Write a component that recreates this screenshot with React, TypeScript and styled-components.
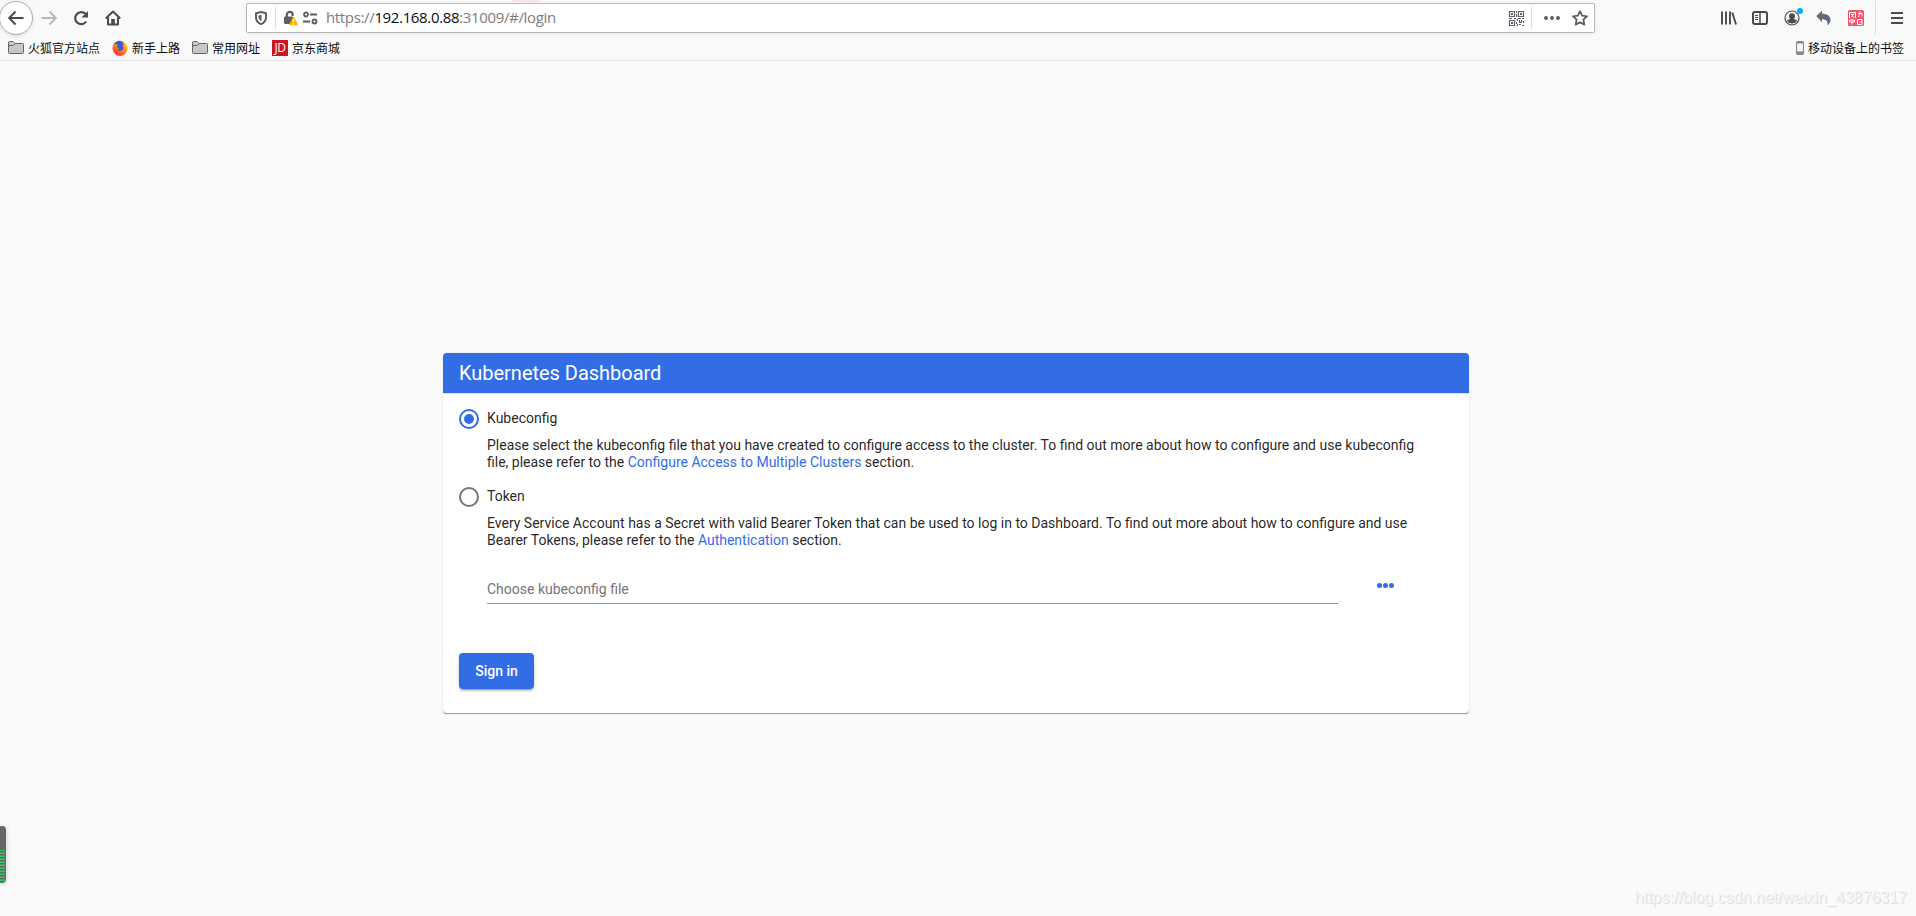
import React, { useState } from "react";
import styled, { createGlobalStyle } from "styled-components";

const GlobalStyle = createGlobalStyle`
  *, *::before, *::after { box-sizing: border-box; }
  html, body { margin: 0; padding: 0; }
  body {
    background: #fafafa;
    color: rgba(0, 0, 0, 0.87);
    font-family: Roboto, "Liberation Sans", sans-serif;
    overflow: hidden;
  }
`;

const Page = styled.div`
  display: flex;
  flex-direction: column;
  width: 100%;
  height: 100vh;
  position: relative;
`;

/* Browser chrome */
const Chrome = styled.header`
  height: 61px;
  flex: none;
  background: #f9f9fa;
  border-bottom: 1px solid #e0e0e1;
  position: relative;
`;

const TabRemnant = styled.span`
  position: absolute;
  left: 512px;
  top: 0;
  width: 28px;
  height: 2px;
  border-radius: 0 0 3px 3px;
  background: #fbe3e5;
`;

const NavBar = styled.div`
  display: flex;
  align-items: center;
  height: 36px;
`;

const Icon = styled.svg<{ $ml?: number; $w?: number; $h?: number }>`
  display: block;
  flex: none;
  width: ${(p) => p.$w ?? 16}px;
  height: ${(p) => p.$h ?? 16}px;
  margin-left: ${(p) => p.$ml ?? 0}px;
  overflow: visible;
`;

const BackButton = styled.div`
  width: 34px;
  height: 34px;
  flex: none;
  margin-left: -1px;
  display: flex;
  align-items: center;
  justify-content: center;
  border: 1px solid #b1b1b3;
  border-radius: 50%;
  background: #fff;
  box-shadow: 0 1px 4px rgba(0, 0, 0, 0.1);
`;

const UrlBar = styled.div`
  display: flex;
  align-items: center;
  width: 1349px;
  height: 30px;
  flex: none;
  margin-left: 125px;
  padding: 0 6px;
  background: #fff;
  border: 1px solid #b8b8ba;
  border-radius: 2px;
  box-shadow: 0 1px 4px rgba(0, 0, 0, 0.06);
`;

const Divider = styled.span<{ $ml: number; $h: number }>`
  width: 1px;
  height: ${(p) => p.$h}px;
  flex: none;
  margin-left: ${(p) => p.$ml}px;
  background: #dcdcde;
`;

const Url = styled.div`
  flex: 1;
  margin-left: 8px;
  padding-bottom: 2px;
  color: #7c7c80;
  font: 15px/20px "Open Sans", "Noto Sans", sans-serif;
  letter-spacing: -0.35px;
  white-space: nowrap;
  b { font-weight: 400; color: #0c0c0d; }
`;

const Bookmarks = styled.div`
  display: flex;
  align-items: center;
  height: 24px;
  padding: 0 12px 1px 8px;
  font: 12px/18px "Noto Sans CJK SC", sans-serif;
  color: #0c0c0d;
`;

const Bookmark = styled.div<{ $mr?: number }>`
  display: flex;
  align-items: center;
  gap: 4px;
  margin-right: ${(p) => p.$mr ?? 12}px;
  white-space: nowrap;
`;

const JdLogo = styled.span`
  width: 16px;
  height: 16px;
  display: flex;
  align-items: center;
  justify-content: center;
  background: #c91623;
  color: #fff;
  font: 12px/16px "Open Sans", sans-serif;
  letter-spacing: -0.4px;
`;

const Spacer = styled.span`
  flex: 1;
`;

/* Login page */
const Main = styled.main`
  flex: 1;
  display: flex;
  justify-content: center;
  align-items: flex-start;
  padding: 292px 4px 0 0;
`;

const Card = styled.section`
  width: 1026px;
  height: 361px;
  background: #fff;
  border-radius: 4px;
  overflow: hidden;
  border-bottom: 1px solid #9c9c9c;
  box-shadow: 0 0 2px rgba(0, 0, 0, 0.16);
`;

const CardTitle = styled.h1`
  margin: 0;
  height: 41px;
  padding: 0 16px;
  background: #326de6;
  background-clip: padding-box;
  border-bottom: 1px solid #e0e0e0;
  color: #fff;
  font-size: 20px;
  font-weight: 400;
  line-height: 40px;
  letter-spacing: -0.02px;
`;

const Form = styled.form`
  padding: 15px 16px 0;
`;

const Option = styled.div`
  height: 78px;
`;

const OptionLabel = styled.label`
  display: flex;
  align-items: center;
  height: 20px;
  gap: 8px;
  font-size: 14px;
  line-height: 17px;
  input { display: none; }
  span { margin-top: -2px; }
`;

const RadioMark = styled.i<{ $on: boolean }>`
  width: 20px;
  height: 20px;
  display: flex;
  align-items: center;
  justify-content: center;
  border: 2px solid ${(p) => (p.$on ? "#326de6" : "#757575")};
  border-radius: 50%;
  &::after {
    content: "";
    width: 10px;
    height: 10px;
    border-radius: 50%;
    background: ${(p) => (p.$on ? "#326de6" : "transparent")};
  }
`;

const Hint = styled.p`
  margin: 8px 0 0 28px;
  width: 940px;
  font-size: 14px;
  line-height: 17px;
  a { color: #326de6; text-decoration: none; }
`;

const FileRow = styled.div`
  display: flex;
  align-items: flex-start;
  margin: 8px 0 0 28px;
`;

const FileField = styled.div`
  width: 851px;
  height: 31px;
  padding-top: 8px;
  border-bottom: 1px solid #949494;
  color: #757575;
  font-size: 14px;
  line-height: 17px;
`;

const MoreButton = styled.button`
  margin: 7px 0 0 33px;
  padding: 0 0 1px;
  width: 28px;
  height: 12px;
  border: 0;
  background: none;
  display: flex;
  align-items: center;
  justify-content: center;
  gap: 1px;
  i { width: 5px; height: 5px; border-radius: 50%; background: #326de6; }
`;

const SignIn = styled.button`
  display: block;
  width: 75px;
  height: 36px;
  margin-top: 49px;
  padding: 0;
  border: 0;
  border-radius: 4px;
  background: #326de6;
  color: #fff;
  font: 500 14px/36px Roboto, sans-serif;
  box-shadow: 0 3px 1px -2px rgba(0, 0, 0, 0.2), 0 2px 2px rgba(0, 0, 0, 0.14), 0 1px 5px rgba(0, 0, 0, 0.12);
`;

const Meter = styled.aside`
  position: absolute;
  left: -2px;
  top: 826px;
  width: 8px;
  height: 57px;
  padding: 24px 1px 1px 0;
  border-radius: 4px;
  background: #666;
  box-shadow: 0 1px 5px rgba(0, 0, 0, 0.2);
  &::after {
    content: "";
    display: block;
    height: 31px;
    background: repeating-linear-gradient(#35c56a 0 1px, #666 1px 2px, #4f9a61 2px 3px);
  }
`;

const Watermark = styled.div`
  position: absolute;
  right: 9px;
  bottom: 8px;
  color: #f4f4f4;
  font: 16px/20px "Liberation Sans", sans-serif;
  text-shadow: 1px 1px 0 #dedede;
`;

const ink = "#4a4a4f";

const FolderIcon = () => (
  <Icon viewBox="0 0 16 16">
    <path d="M.5 2.500q0-1 1-1H5l2 2h7.500q1 0 1 1V12.500q0 1-1 1h-13q-1 0-1-1Z" fill="#c8c8ca" stroke="#646467" />
    <path d="M1 5.500h4.500l2-2" fill="none" stroke="#646467" />
  </Icon>
);

const FirefoxIcon = () => (
  <Icon viewBox="0 0 16 16">
    <defs>
      <linearGradient id="flame" x1=".8" y1="0" x2=".2" y2="1">
        <stop offset="0" stopColor="#ffe32b" />
        <stop offset=".5" stopColor="#ff8415" />
        <stop offset="1" stopColor="#ee2848" />
      </linearGradient>
    </defs>
    <circle cx="7.500" cy="7" r="6.200" fill="#3b5bd0" />
    <path d="M10 .5c2 1.400 5.500 3.500 5.500 8a7.400 7.400 0 0 1-15 0c0-2.200 1-4.600 2.300-5.500v1.600C4 3.800 5.600 4.200 6 5.200c-1 .5-1.600 1.200-1.200 2.100.8.8 2.300 0 2.500.8 0 .9-1.500.8-1.600 1.500.8 1.800 4.700 1.800 5.500-.8.7-2-.2-3.500-1.400-4.300 1.200 0 1.800.3 2.200.9C12 3.500 10 2.400 10 .5Z" fill="url(#flame)" />
  </Icon>
);

const UrlIcons = () => (
  <>
    <Icon viewBox="0 0 16 16">
      <path d="M8 2 13 3.200v4c0 3.400-1.800 5.500-5 7-3.200-1.500-5-3.600-5-7v-4Z" fill="none" stroke="#5f5f63" strokeWidth="2" strokeLinejoin="round" />
      <path d="M8.500 4.800v6.400C6.700 10.300 5.500 9.100 5.500 7.200V5.400Z" fill="#5f5f63" />
    </Icon>
    <Divider $ml={6} $h={22} />
    <Icon viewBox="0 0 16 16" $ml={7}>
      <path d="M3.800 8V4.800a2.900 2.900 0 0 1 5.800 0V6" fill="none" stroke="#5f5f63" strokeWidth="2.200" />
      <rect x="1" y="6.500" width="9" height="7.500" rx="1.200" fill="#5f5f63" />
      <path d="m10.500 7 4 7.800h-8Z" fill="#ffb000" stroke="#ffb000" strokeLinejoin="round" />
      <path d="M10.500 9v3M10.500 13.200v1.200" stroke="#fff" strokeWidth="1.300" />
    </Icon>
    <Icon viewBox="0 0 16 16" $ml={3}>
      <g fill="none" stroke="#5f5f63" strokeWidth="1.800">
        <circle cx="4" cy="4.500" r="2" /><path d="M8 4.500h7M1 11.500h7" />
        <circle cx="12.500" cy="11.500" r="2" />
      </g>
    </Icon>
  </>
);

const QrIcon = () => (
  <Icon viewBox="0 0 15 15" $w={15} $h={15}>
    <g fill="none" stroke="#5c6068" strokeWidth="1.150">
      <path d="M.5.5h5v5h-5ZM9.500.5h5v5h-5ZM.5 9.500h5v5h-5Z" />
      <path d="M7.500 0v2M7.500 3v3M0 7.500h3M5 7.500h2M9 7.500h3M13 7.500h2M8.500 8v2M10.500 9v3M12.500 9v2M14.500 10v2M7.500 11v2M8.500 13v2M10 13.500h2M13 14.500h2M11 11.500h2" />
    </g>
    <path d="M2 2h2v2H2ZM11 2h2v2h-2ZM2 11h2v2H2Z" fill="#5c6068" />
  </Icon>
);

const ToolbarIcons = () => (
  <>
    <Icon viewBox="0 0 16 16" $ml={126}>
      <path d="M1 1.500v13M5 1.500v13M9 1.500v13M11.300 2.500 15 14.500" fill="none" stroke={ink} strokeWidth="1.900" />
    </Icon>
    <Icon viewBox="0 0 16 16" $ml={15}>
      <rect x="1" y="2" width="14" height="12" rx="2" fill="none" stroke={ink} strokeWidth="2" />
      <path d="M8 2v12" stroke={ink} strokeWidth="1.500" /><path d="M3 5.500h3M3 7.500h3M3 9.500h3" stroke={ink} />
    </Icon>
    <Icon viewBox="0 0 16 16" $ml={16}>
      <circle cx="8" cy="8" r="7" fill="none" stroke={ink} strokeWidth="1.200" />
      <circle cx="8" cy="6.300" r="3" fill={ink} />
      <path d="M3 10.800c1-1 2.500-1.500 3.400-1.700h3.200c1 .2 2.400.7 3.400 1.700-2 3.600-8 3.600-10 0Z" fill={ink} />
      <circle cx="16" cy="1" r="3" fill="#00b3f4" />
    </Icon>
    <Icon viewBox="0 0 16 16" $ml={16}>
      <path d="M.3 6 6 .8v3c5 0 8.500 2.200 8.500 6.200 0 2.400-1.200 4-3.500 5.200 1.500-3.600-.5-6-5-6v3Z" fill="#5f6b78" />
    </Icon>
    <Icon viewBox="0 0 16 16" $ml={16}>
      <rect width="16" height="16" rx="1.500" fill="#f4516c" />
      <g fill="none" stroke="#fff">
        <path d="M1.500 2.500h6M1.500 2.500v5.500M7.500 2.500v5.500M3 4.500h3M4.500 3.500v3M3 7.500l1.500-1.500L6 7.500M10 3.500h4v3M12 1.500v2L10.500 7M1.500 10v2h5v-2ZM4 9v5.500M9.500 9.500h4.500v5M9.500 9.500v5H14M11.500 12H14" />
      </g>
    </Icon>
    <Divider $ml={11} $h={34} />
    <Icon viewBox="0 0 12 16" $ml={15} $w={12}>
      <path d="M0 3h12M0 8h12M0 13h12" stroke={ink} strokeWidth="2" />
    </Icon>
  </>
);

export default function App() {
  const [mode, setMode] = useState("kubeconfig");
  return (
    <Page>
      <GlobalStyle />
      <Chrome>
        <TabRemnant />
        <NavBar>
          <BackButton>
            <Icon viewBox="0 0 16 16">
              <path d="M15.500 8H1.500M7.500 1.500 1.200 8l6.300 6.500" fill="none" stroke={ink} strokeWidth="2" />
            </Icon>
          </BackButton>
          <Icon viewBox="0 0 16 16" $ml={8}>
            <path d="M.5 8h14M8.500 1.500 14.800 8l-6.300 6.500" fill="none" stroke="#b9b9bb" strokeWidth="2" />
          </Icon>
          <Icon viewBox="0 0 16 16" $ml={16}>
            <path d="M13.200 11.500A6 6 0 1 1 12.500 4" fill="none" stroke={ink} strokeWidth="2.200" />
            <path d="M15 1v6.500H8.500Z" fill={ink} />
          </Icon>
          <Icon viewBox="0 0 16 16" $ml={16}>
            <path d="M.8 8.500 8 1.500l7.200 7M3 7.500V14.500h10V7.500" fill="none" stroke={ink} strokeWidth="2" strokeLinejoin="round" />
            <path d="M6.200 15V9h3.600v6Z" fill={ink} />
          </Icon>
          <UrlBar>
            <UrlIcons />
            <Url>https://<b>192.168.0.88</b>:31009/#/login</Url>
            <QrIcon />
            <Divider $ml={7} $h={22} />
            <Icon viewBox="0 0 16 16" $ml={12}>
              <g fill="#5f5f63"><circle cx="2" cy="8" r="2" /><circle cx="8" cy="8" r="2" /><circle cx="14" cy="8" r="2" /></g>
            </Icon>
            <Icon viewBox="0 0 16 16" $ml={12}>
              <path d="m8 1.200 2.100 4.500 4.900.6-3.600 3.400.9 4.900L8 12.200l-4.300 2.400.9-4.900L1 6.300l4.900-.6Z" fill="none" stroke="#5f5f63" strokeWidth="1.800" strokeLinejoin="round" />
            </Icon>
          </UrlBar>
          <ToolbarIcons />
        </NavBar>
        <Bookmarks>
          <Bookmark><FolderIcon />火狐官方站点</Bookmark>
          <Bookmark><FirefoxIcon />新手上路</Bookmark>
          <Bookmark><FolderIcon />常用网址</Bookmark>
          <Bookmark><JdLogo>JD</JdLogo>京东商城</Bookmark>
          <Spacer />
          <Bookmark $mr={0}>
            <Icon viewBox="0 0 8 14" $w={8} $h={14}>
              <rect x=".5" y=".5" width="7" height="13" rx="1" fill="#85858a" stroke="#85858a" />
              <path d="M1 2.500h6v8H1Z" fill="#f5f5f6" />
            </Icon>
            移动设备上的书签
          </Bookmark>
        </Bookmarks>
      </Chrome>

      <Main>
        <Card>
          <CardTitle>Kubernetes Dashboard</CardTitle>
          <Form onSubmit={(e) => e.preventDefault()}>
            <Option>
              <OptionLabel>
                <input type="radio" name="mode" checked={mode === "kubeconfig"} onChange={() => setMode("kubeconfig")} />
                <RadioMark $on={mode === "kubeconfig"} />
                <span>Kubeconfig</span>
              </OptionLabel>
              <Hint>
                Please select the kubeconfig file that you have created to configure access to the cluster. To find out more about how to configure and use kubeconfig file, please refer to the <a href="#clusters">Configure Access to Multiple Clusters</a> section.
              </Hint>
            </Option>
            <Option>
              <OptionLabel>
                <input type="radio" name="mode" checked={mode === "token"} onChange={() => setMode("token")} />
                <RadioMark $on={mode === "token"} />
                <span>Token</span>
              </OptionLabel>
              <Hint>
                Every Service Account has a Secret with valid Bearer Token that can be used to log in to Dashboard. To find out more about how to configure and use Bearer Tokens, please refer to the <a href="#auth">Authentication</a> section.
              </Hint>
            </Option>
            <FileRow>
              <FileField>Choose kubeconfig file</FileField>
              <MoreButton type="button" aria-label="Choose file"><i /><i /><i /></MoreButton>
            </FileRow>
            <SignIn type="submit">Sign in</SignIn>
          </Form>
        </Card>
      </Main>

      <Meter />
      <Watermark>https://blog.csdn.net/weixin_43876317</Watermark>
    </Page>
  );
}
